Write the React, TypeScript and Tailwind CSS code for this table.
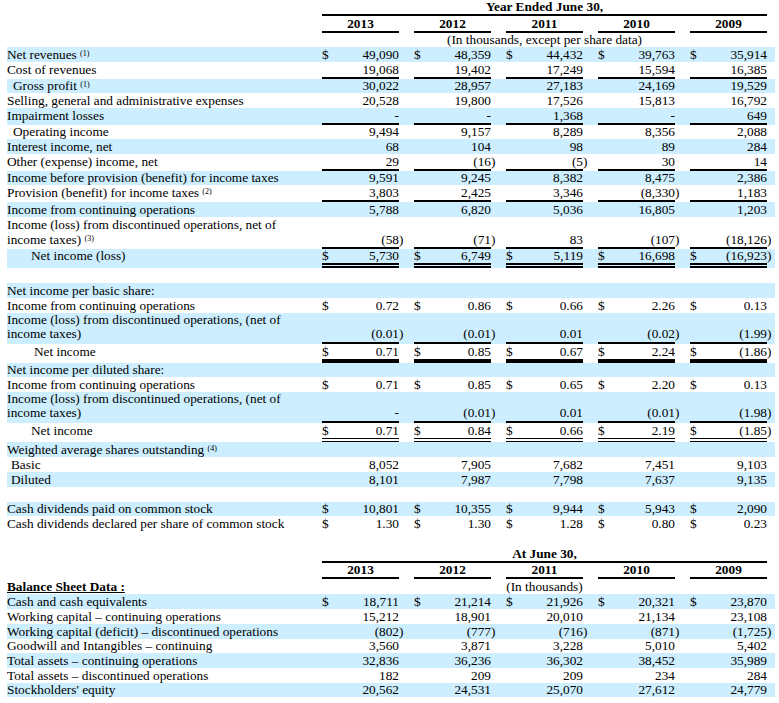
import type { ReactNode } from "react";
import clsx from "clsx";

type Line = "none" | "single" | "thick" | "double" | "thin";

const lineClass: Record<Line, string> = {
  none: "",
  single: "border-b-2 border-black",
  thick: "border-b-4 border-black",
  double: "border-b-[5px] border-double border-black",
  thin: "border-b-4 border-double border-black",
};

type RowSpec = {
  label?: ReactNode;
  vals?: string[];
  dollar?: boolean;
  line?: Line;
  blue?: boolean;
  h: string;
  lh?: 14 | 15;
  two?: boolean;
  indent?: string;
};

function Sup({ children }: { children: ReactNode }) {
  return <sup className="top-[-3px] text-[8px]">{children}</sup>;
}

function Num({ v, dollar, line, lh, two, first }: { v: string; dollar?: boolean; line: Line; lh: 14 | 15; two?: boolean; first: boolean }) {
  const neg = v.startsWith("(");
  const body = neg ? v.slice(0, -1) : v;
  return (
    <div
      className={clsx(
        "flex w-[77px] shrink-0 justify-between whitespace-nowrap",
        !first && "ml-[15px]",
        lh === 14 ? "leading-[14px]" : "leading-[15px]",
        two && (lh === 14 ? "pt-[14px]" : "pt-[15px]"),
        lineClass[line],
      )}
    >
      <span>{dollar ? "$" : ""}</span>
      <span>
        {body}
        {neg ? <span className="inline-block w-0">)</span> : null}
      </span>
    </div>
  );
}

function Row({ label, vals, dollar, line = "none", blue, h, lh = 15, two, indent }: RowSpec) {
  return (
    <div className={clsx("flex w-[768px]", h, blue && "bg-[#cceeff]")}>
      <div className={clsx("w-[315px] shrink-0 whitespace-nowrap", indent, lh === 14 ? "leading-[14px]" : "leading-[15px]")}>
        {label}
      </div>
      {vals?.map((v, i) => (
        <Num key={i} v={v} dollar={dollar} line={line} lh={lh} two={two} first={i === 0} />
      ))}
    </div>
  );
}

const years = ["2013", "2012", "2011", "2010", "2009"];

const incomeRows: RowSpec[] = [
  { label: <>Net revenues <Sup>(1)</Sup></>, vals: ["49,090", "48,359", "44,432", "39,763", "35,914"], dollar: true, blue: true, h: "h-[15px]" },
  { label: "Cost of revenues", vals: ["19,068", "19,402", "17,249", "15,594", "16,385"], line: "single", h: "h-[17px]" },
  { label: <>Gross profit <Sup>(1)</Sup></>, vals: ["30,022", "28,957", "27,183", "24,169", "19,529"], blue: true, h: "h-[14px]", lh: 14, indent: "pl-[6px]" },
  { label: "Selling, general and administrative expenses", vals: ["20,528", "19,800", "17,526", "15,813", "16,792"], h: "h-[15px]" },
  { label: "Impairment losses", vals: ["-", "-", "1,368", "-", "649"], line: "single", blue: true, h: "h-[17px]" },
  { label: "Operating income", vals: ["9,494", "9,157", "8,289", "8,356", "2,088"], h: "h-[14px]", lh: 14, indent: "pl-[6px]" },
  { label: "Interest income, net", vals: ["68", "104", "98", "89", "284"], blue: true, h: "h-[15px]" },
  { label: "Other (expense) income, net", vals: ["29", "(16)", "(5)", "30", "14"], line: "single", h: "h-[17px]" },
  { label: "Income before provision (benefit) for income taxes", vals: ["9,591", "9,245", "8,382", "8,475", "2,386"], blue: true, h: "h-[14px]", lh: 14 },
  { label: <>Provision (benefit) for income taxes <Sup>(2)</Sup></>, vals: ["3,803", "2,425", "3,346", "(8,330)", "1,183"], line: "single", h: "h-[17px]" },
  { label: "Income from continuing operations", vals: ["5,788", "6,820", "5,036", "16,805", "1,203"], blue: true, h: "h-[15px]" },
  {
    label: <>Income (loss) from discontinued operations, net of<br />income taxes) <Sup>(3)</Sup></>,
    vals: ["(58)", "(71)", "83", "(107)", "(18,126)"],
    line: "single",
    h: "h-[32px]",
    two: true,
  },
  { label: "Net income (loss)", vals: ["5,730", "6,749", "5,119", "16,698", "(16,923)"], dollar: true, line: "double", blue: true, h: "h-[19px]", lh: 14, indent: "pl-[24px]" },
  { h: "h-[15px]" },
  { label: "Net income per basic share:", blue: true, h: "h-[15px]" },
  { label: "Income from continuing operations", vals: ["0.72", "0.86", "0.66", "2.26", "0.13"], dollar: true, h: "h-[15px]" },
  {
    label: <>Income (loss) from discontinued operations, (net of<br />income taxes)</>,
    vals: ["(0.01)", "(0.01)", "0.01", "(0.02)", "(1.99)"],
    line: "single",
    blue: true,
    h: "h-[31px]",
    lh: 14,
    two: true,
  },
  { label: "Net income", vals: ["0.71", "0.85", "0.67", "2.24", "(1.86)"], dollar: true, line: "thick", h: "h-[19px]", indent: "pl-[27px]" },
  { label: "Net income per diluted share:", blue: true, h: "h-[14px]", lh: 14 },
  { label: "Income from continuing operations", vals: ["0.71", "0.85", "0.65", "2.20", "0.13"], dollar: true, h: "h-[15px]" },
  {
    label: <>Income (loss) from discontinued operations, (net of<br />income taxes)</>,
    vals: ["-", "(0.01)", "0.01", "(0.01)", "(1.98)"],
    line: "single",
    blue: true,
    h: "h-[31px]",
    lh: 14,
    two: true,
  },
  { label: "Net income", vals: ["0.71", "0.84", "0.66", "2.19", "(1.85)"], dollar: true, line: "thin", h: "h-[19px]", indent: "pl-[24px]" },
  { label: <>Weighted average shares outstanding <Sup>(4)</Sup></>, blue: true, h: "h-[15px]" },
  { label: "Basic", vals: ["8,052", "7,905", "7,682", "7,451", "9,103"], h: "h-[15px]", indent: "pl-[4px]" },
  { label: "Diluted", vals: ["8,101", "7,987", "7,798", "7,637", "9,135"], blue: true, h: "h-[15px]", indent: "pl-[4px]" },
  { h: "h-[15px]" },
  { label: "Cash dividends paid on common stock", vals: ["10,801", "10,355", "9,944", "5,943", "2,090"], dollar: true, blue: true, h: "h-[14px]", lh: 14 },
  { label: "Cash dividends declared per share of common stock", vals: ["1.30", "1.30", "1.28", "0.80", "0.23"], dollar: true, h: "h-[15px]" },
];

const balanceRows: RowSpec[] = [
  { label: "Cash and cash equivalents", vals: ["18,711", "21,214", "21,926", "20,321", "23,870"], dollar: true, blue: true, h: "h-[15px]" },
  { label: "Working capital – continuing operations", vals: ["15,212", "18,901", "20,010", "21,134", "23,108"], h: "h-[15px]" },
  { label: "Working capital (deficit) – discontinued operations", vals: ["(802)", "(777)", "(716)", "(871)", "(1,725)"], blue: true, h: "h-[15px]" },
  { label: "Goodwill and Intangibles – continuing", vals: ["3,560", "3,871", "3,228", "5,010", "5,402"], h: "h-[14px]", lh: 14 },
  { label: "Total assets – continuing operations", vals: ["32,836", "36,236", "36,302", "38,452", "35,989"], blue: true, h: "h-[15px]" },
  { label: "Total assets – discontinued operations", vals: ["182", "209", "209", "234", "284"], h: "h-[15px]" },
  { label: "Stockholders' equity", vals: ["20,562", "24,531", "25,070", "27,612", "24,779"], blue: true, h: "h-[14px]", lh: 14 },
];

function YearRow({ h }: { h: string }) {
  return (
    <div className={clsx("flex w-[768px]", h)}>
      <div className="w-[315px] shrink-0" />
      {years.map((y, i) => (
        <div
          key={y}
          className={clsx("w-[77px] shrink-0 border-b-2 border-black text-center font-bold leading-[14px]", i > 0 && "ml-[15px]")}
        >
          {y}
        </div>
      ))}
    </div>
  );
}

export default function App() {
  return (
    <div className="min-h-[703px] w-[779px] bg-white pl-[7px] font-['Liberation_Serif',serif] text-[13.3px] text-black">
      <div className="flex h-[16px] w-[768px]">
        <div className="w-[315px] shrink-0" />
        <div className="w-[445px] shrink-0 border-b-2 border-black text-center font-bold leading-[14px]">Year Ended June 30,</div>
      </div>
      <YearRow h="h-[17px] pt-px" />
      <div className="flex h-[14px] w-[768px] leading-[14px]">
        <div className="w-[315px] shrink-0" />
        <div className="w-[445px] shrink-0 text-center">(In thousands, except per share data)</div>
      </div>

      {incomeRows.map((row, i) => (
        <Row key={i} {...row} />
      ))}

      <div className="h-[16px]" />
      <div className="flex h-[16px] w-[768px]">
        <div className="w-[315px] shrink-0" />
        <div className="w-[445px] shrink-0 border-b-2 border-black text-center font-bold leading-[14px]">At June 30,</div>
      </div>
      <YearRow h="h-[16px]" />
      <div className="flex h-[15px] w-[768px] leading-[15px]">
        <div className="w-[315px] shrink-0 font-bold underline">Balance Sheet Data :</div>
        <div className="w-[445px] shrink-0 text-center">(In thousands)</div>
      </div>

      {balanceRows.map((row, i) => (
        <Row key={i} {...row} />
      ))}
    </div>
  );
}
